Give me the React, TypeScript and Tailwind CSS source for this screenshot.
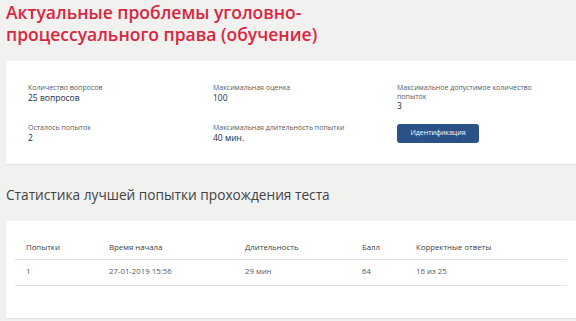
import React from 'react'

const font = { fontFamily: '"Open Sans", "Noto Sans", sans-serif' }

interface InfoItemProps {
  label: string
  value: string
}

// Bloc libellé + valeur dans la carte d'informations
const InfoItem = ({ label, value }: InfoItemProps) => (
  <div className="flex flex-col">
    <span className="text-[7px] leading-[8.5px] text-[#555a60]">{label}</span>
    <span className="text-[8.5px] leading-[9px] text-[#1d2a44]">{value}</span>
  </div>
)

const rows = [
  { attempt: '1', start: '27-01-2019 15:56', duration: '29 мин', score: '64', correct: '16 из 25' },
]

export default function App() {
  return (
    <div className="min-h-[321px] w-[576px] overflow-hidden bg-[#f1f1ef]" style={font}>
      <h1 className="pl-[6px] pt-[1px] text-[17.5px] font-semibold leading-[22px] text-[#d8273f]">
        Актуальные проблемы уголовно-
        <br />
        процессуального права (обучение)
      </h1>

      <div className="ml-[6px] mt-[16px] h-[103px] bg-white pl-[22px] pt-[23px] shadow-[0_1px_1px_rgba(0,0,0,0.06)]">
        <div className="grid grid-cols-[185px_184px_1fr] gap-y-[14px]">
          <InfoItem label="Количество вопросов" value="25 вопросов" />
          <InfoItem label="Максимальная оценка" value="100" />
          <div className="flex flex-col">
            <span className="text-[7px] leading-[8.5px] text-[#555a60]">
              Максимальное допустимое количество
              <br />
              попыток
            </span>
            <span className="text-[8.5px] leading-[9px] text-[#1d2a44]">3</span>
          </div>
          <div>
            <InfoItem label="Осталось попыток" value="2" />
          </div>
          <div>
            <InfoItem label="Максимальная длительность попытки" value="40 мин." />
          </div>
          <div className="-mt-[7px]">
            <button className="h-[19px] w-[82px] rounded-[3px] bg-[#2a5287] text-[7px] text-white">
              Идентификация
            </button>
          </div>
        </div>
      </div>

      <h2 className="mt-[21px] pl-[6px] text-[13.7px] leading-[20px] text-[#404346]">
        Статистика лучшей попытки прохождения теста
      </h2>

      <div className="ml-[6px] mt-[16px] h-[97px] bg-white pl-[9px] pr-[3px] pt-[17px] shadow-[0_1px_1px_rgba(0,0,0,0.06)]">
        <table className="w-[552px] border-collapse text-left text-[7.8px]">
          <thead>
            <tr className="h-[21px] border-b border-[#e2e2e2] text-[#3a3d40]">
              <th className="w-[94px] pl-[11px] font-normal">Попытки</th>
              <th className="w-[136px] font-normal">Время начала</th>
              <th className="w-[117px] font-normal">Длительность</th>
              <th className="w-[54px] font-normal">Балл</th>
              <th className="font-normal">Корректные ответы</th>
            </tr>
          </thead>
          <tbody>
            {rows.map((r) => (
              <tr key={r.attempt} className="h-[26px] border-b border-[#e2e2e2] text-[#55585c]">
                <td className="pl-[11px]">{r.attempt}</td>
                <td>{r.start}</td>
                <td>{r.duration}</td>
                <td>{r.score}</td>
                <td>{r.correct}</td>
              </tr>
            ))}
          </tbody>
        </table>
      </div>
    </div>
  )
}
